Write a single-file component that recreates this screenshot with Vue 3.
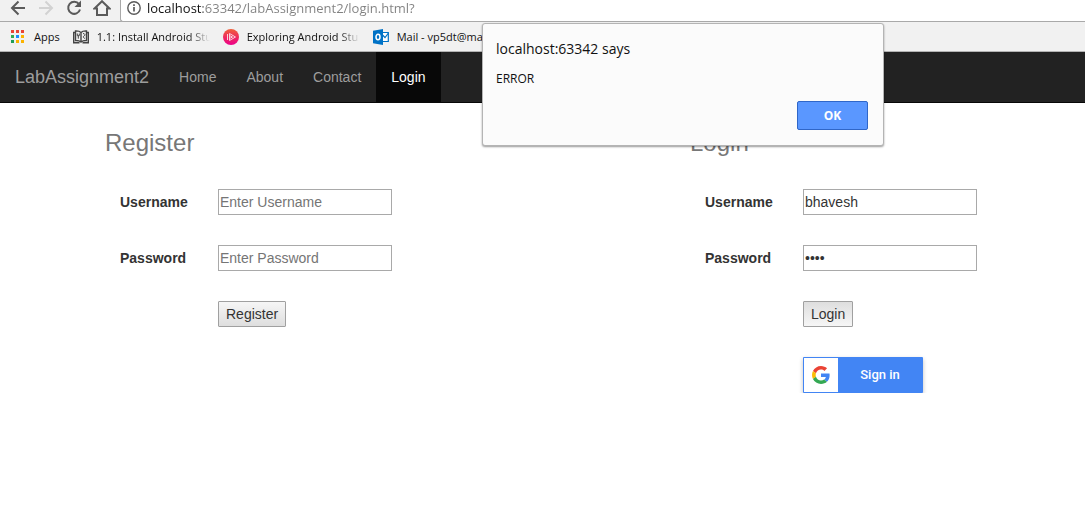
<script setup>
import { ref } from 'vue'

const address = ref('localhost:63342/labAssignment2/login.html?')
const newUser = ref('')
const newPassword = ref('')
const user = ref('bhavesh')
const password = ref('abcd')
const dialogOpen = ref(true)

const links = [
  { text: 'Home' },
  { text: 'About' },
  { text: 'Contact' },
  { text: 'Login', active: true },
]

const appColors = [
  '#ea4335', '#ea4335', '#ea4335',
  '#34a853', '#1a8cff', '#fbb300',
  '#1e9e57', '#fbb300', '#fbb300',
]
</script>

<template>
  <div class="window">
    <div class="toolbar">
      <button class="tool" type="button" aria-label="Back">
        <svg width="16" height="16" viewBox="0 0 16 16" fill="none" stroke="#5a5a5a" stroke-width="2">
          <path d="M15 8H2.500M8.500 1.500L2 8l6.500 6.500" />
        </svg>
      </button>
      <button class="tool" type="button" aria-label="Forward" disabled>
        <svg width="16" height="16" viewBox="0 0 16 16" fill="none" stroke="#d2d2d2" stroke-width="2">
          <path d="M1 8h12.500M7.500 1.500L14 8l-6.500 6.500" />
        </svg>
      </button>
      <button class="tool" type="button" aria-label="Reload">
        <svg width="16" height="16" viewBox="0 0 16 16" fill="none" stroke="#5a5a5a" stroke-width="2">
          <path d="M13 4.200A6 6 0 1 0 14 9.500" />
          <path d="M15 0.500V7H8.500z" fill="#5a5a5a" stroke="none" />
        </svg>
      </button>
      <button class="tool" type="button" aria-label="Home page">
        <svg width="18" height="16" viewBox="0 0 18 16" fill="none" stroke="#5a5a5a" stroke-width="2">
          <path d="M1.500 8.500L9 1.200l7.500 7.300h-2.500V15H4V8.500z" />
        </svg>
      </button>
      <div class="omnibox">
        <svg width="14" height="14" viewBox="0 0 14 14" fill="none" stroke="#5a5a5a">
          <circle cx="7" cy="7" r="6.200" stroke-width="1.400" />
          <path d="M7 6v4.500M7 3.300v1.700" stroke-width="1.700" />
        </svg>
        <input v-model="address" class="address" type="text" aria-label="Address" spellcheck="false" />
      </div>
    </div>

    <div class="bookmarks">
      <a class="bookmark apps" href="#">
        <svg width="13" height="13" viewBox="0 0 13 13">
          <rect
            v-for="(color, i) in appColors"
            :key="i"
            :x="(i % 3) * 5"
            :y="Math.floor(i / 3) * 5"
            width="3"
            height="3"
            :fill="color"
          />
        </svg>
        <span>Apps</span>
      </a>
      <a class="bookmark" href="#">
        <svg width="16" height="14" viewBox="0 0 16 14" fill="none" stroke="#444" stroke-width="1.400">
          <path d="M8 2.500C6.500 1 4.500 0.800 2.500 0.900v9.600C4.500 10.400 6.500 10.700 8 12c1.500-1.300 3.500-1.600 5.500-1.500V0.900C11.500 0.800 9.500 1 8 2.500zM8 2.500V12" />
          <path d="M2.500 2.500H0.700v10.300h5.800M13.500 2.500h1.800v10.300H9.500" />
          <path d="M4.300 3.500v2.200h2V3.500M5.300 5.700v3M10 3.500c2.200 0 2.500 1.800 1 2.500-1 .5-1 1.500.8 2.500" stroke-width="1" />
        </svg>
        <span class="clipped">1.1: Install Android Stu</span>
      </a>
      <a class="bookmark" href="#">
        <svg width="16" height="16" viewBox="0 0 16 16">
          <defs>
            <linearGradient id="disc" x1="0" y1="0" x2="0" y2="1">
              <stop offset="0" stop-color="#f0603a" />
              <stop offset="0.600" stop-color="#ee2264" />
              <stop offset="1" stop-color="#ec008c" />
            </linearGradient>
          </defs>
          <circle cx="8" cy="8" r="8" fill="url(#disc)" />
          <path d="M4.500 5v6M6.500 4.500v7l6-3.500zM6.500 6.500l3 1.500-3 1.500" fill="none" stroke="#fbd3dc" stroke-width="1" />
        </svg>
        <span class="clipped">Exploring Android Stu</span>
      </a>
      <a class="bookmark" href="#">
        <svg width="16" height="16" viewBox="0 0 16 16">
          <path d="M9 3.500h6.300v9H9" fill="#fff" stroke="#0072c6" stroke-width="1.200" />
          <path d="M9 5.500l3 3 3.500-4.500" fill="none" stroke="#0072c6" stroke-width="1.200" />
          <path d="M0 1.700L10 0v16L0 14.300z" fill="#0072c6" />
          <ellipse cx="5" cy="8" rx="2" ry="2.700" fill="none" stroke="#fff" stroke-width="1.500" />
        </svg>
        <span>Mail - vp5dt@mail</span>
      </a>
    </div>

    <nav class="navbar">
      <a class="brand" href="#">LabAssignment2</a>
      <a
        v-for="link in links"
        :key="link.text"
        class="nav-link"
        :class="{ active: link.active }"
        href="#"
      >{{ link.text }}</a>
    </nav>

    <main class="content">
      <section>
        <h3>Register</h3>
        <form class="fields" @submit.prevent>
          <label for="new-user">Username</label>
          <input id="new-user" v-model="newUser" type="text" placeholder="Enter Username" />
          <label for="new-password">Password</label>
          <input id="new-password" v-model="newPassword" type="password" placeholder="Enter Password" />
          <button class="submit" type="submit">Register</button>
        </form>
      </section>
      <section>
        <h3>Login</h3>
        <form class="fields" @submit.prevent="dialogOpen = true">
          <label for="user">Username</label>
          <input id="user" v-model="user" type="text" />
          <label for="password">Password</label>
          <input id="password" v-model="password" type="password" />
          <button class="submit pressed" type="submit">Login</button>
          <button class="google" type="button">
            <span class="google-icon">
              <svg width="18" height="18" viewBox="0 0 48 48">
                <path fill="#EA4335" d="M24 9.500c3.540 0 6.710 1.220 9.210 3.600l6.850-6.850C35.900 2.380 30.470 0 24 0 14.620 0 6.510 5.380 2.560 13.220l7.980 6.190C12.430 13.720 17.740 9.500 24 9.500z" />
                <path fill="#4285F4" d="M46.980 24.550c0-1.570-.15-3.090-.38-4.550H24v9.020h12.940c-.58 2.960-2.260 5.480-4.780 7.180l7.730 6c4.510-4.180 7.090-10.360 7.090-17.650z" />
                <path fill="#FBBC05" d="M10.530 28.590c-.48-1.450-.76-2.990-.76-4.590s.27-3.140.76-4.590l-7.980-6.190C.92 16.460 0 20.120 0 24c0 3.880.92 7.540 2.560 10.780l7.970-6.190z" />
                <path fill="#34A853" d="M24 48c6.480 0 11.930-2.130 15.890-5.810l-7.730-6c-2.150 1.450-4.920 2.300-8.160 2.300-6.260 0-11.570-4.220-13.470-9.910l-7.980 6.190C6.510 42.620 14.620 48 24 48z" />
              </svg>
            </span>
            <span class="google-text">Sign in</span>
          </button>
        </form>
      </section>
    </main>

    <div v-if="dialogOpen" class="dialog" role="alertdialog" aria-labelledby="dialog-title">
      <h2 id="dialog-title">localhost:63342 says</h2>
      <p>ERROR</p>
      <button type="button" @click="dialogOpen = false">OK</button>
    </div>
  </div>
</template>

<style>
body {
  margin: 0;
  background: #fff;
}
</style>

<style scoped>
.window,
.window * {
  box-sizing: border-box;
}

.window {
  position: relative;
  overflow: hidden;
  font-family: "Liberation Sans", Arial, sans-serif;
  font-size: 14px;
  line-height: 20px;
  color: #333;
}

a {
  text-decoration: none;
}

button,
input {
  font: inherit;
  color: inherit;
}

svg {
  display: block;
  flex: none;
}

.toolbar {
  display: flex;
  height: 22px;
  padding-left: 4px;
  background: #f1f1f1;
  border-bottom: 1px solid #a9a9a9;
}

.tool {
  display: flex;
  justify-content: center;
  width: 28px;
  height: 16px;
  padding: 0;
  border: 0;
  background: none;
}

.omnibox {
  display: flex;
  flex: 1;
  align-items: flex-start;
  gap: 6px;
  height: 22px;
  margin-left: 4px;
  padding: 1px 0 0 6px;
  background: #fff;
  border: solid #a9a9a9;
  border-width: 0 0 1px 1px;
  border-radius: 0 0 0 3px;
}

.address {
  flex: 1;
  height: 18px;
  margin-top: -2px;
  padding: 0;
  border: 0;
  outline: 0;
  font-family: "Open Sans", "Noto Sans", sans-serif;
  font-size: 13px;
  line-height: 18px;
  color: transparent;
  background: linear-gradient(to right, #111 56px, #808080 56px);
  background-clip: text;
}

.bookmarks {
  display: flex;
  align-items: center;
  height: 30px;
  padding-left: 11px;
  background: #f1f1f1;
  border-bottom: 1px solid #b3b3b3;
  font-family: "Open Sans", "Noto Sans", sans-serif;
  font-size: 11px;
}

.bookmark {
  display: flex;
  align-items: center;
  gap: 8px;
  margin-right: 13px;
  color: #111;
  white-space: nowrap;
}

.apps {
  gap: 10px;
}

.clipped {
  width: 113px;
  overflow: hidden;
  mask-image: linear-gradient(to right, #000 92px, transparent 113px);
}

.navbar {
  display: flex;
  height: 51px;
  background: #222;
  border-bottom: 1px solid #080808;
}

.navbar a {
  padding: 15px;
  color: #9d9d9d;
}

.navbar .brand {
  font-size: 18px;
}

.navbar .active {
  color: #fff;
  background: #080808;
}

.content {
  display: grid;
  grid-template-columns: 3fr 2fr;
  padding: 27px 5px 0 105px;
}

h3 {
  margin: 0;
  font-size: 24px;
  font-weight: 400;
  line-height: 26px;
  color: #777;
}

.fields {
  display: grid;
  grid-template-columns: 68px 174px;
  gap: 30px;
  align-items: center;
  margin: 33px 15px 0;
}

.fields label {
  font-weight: 700;
}

.fields input {
  height: 26px;
  padding: 1px;
  border: 1px solid #a9a9a9;
  background: #fff;
}

.fields input::placeholder {
  color: #757575;
}

.submit {
  grid-column: 2;
  justify-self: start;
  height: 26px;
  padding: 1px 7px;
  border: 1px solid #a0a0a0;
  border-radius: 1px;
  background: linear-gradient(#f6f6f6, #dedede);
}

.pressed {
  background: linear-gradient(#dedede, #f6f6f6);
}

.google {
  display: flex;
  grid-column: 2;
  width: 120px;
  height: 36px;
  padding: 1px;
  border: 0;
  border-radius: 1px;
  background: #4285f4;
  box-shadow: 0 2px 4px rgba(0, 0, 0, 0.25);
}

.google-icon {
  display: flex;
  align-items: center;
  justify-content: center;
  width: 34px;
  height: 34px;
  background: #fff;
}

.google-text {
  flex: 1;
  font-family: Roboto, sans-serif;
  font-size: 13px;
  font-weight: 500;
  line-height: 34px;
  color: #fff;
}

.dialog {
  position: absolute;
  top: 23px;
  left: 482px;
  display: flex;
  flex-direction: column;
  width: 402px;
  padding: 15px;
  padding-left: 13px;
  border: 1px solid #b4b4b4;
  border-radius: 3px;
  background: #fbfbfb;
  box-shadow: 0 1px 2px rgba(0, 0, 0, 0.4);
  font-family: "Open Sans", "Noto Sans", sans-serif;
  color: #111;
}

.dialog h2 {
  margin: 0;
  font-size: 14px;
  font-weight: 400;
  line-height: 20px;
}

.dialog p {
  margin: 10px 0 12px;
  font-size: 12px;
  line-height: 20px;
}

.dialog button {
  align-self: flex-end;
  width: 71px;
  height: 29px;
  padding: 0;
  border: 1px solid #2f66c8;
  border-radius: 2px;
  background: #5a97ff;
  font-size: 12px;
  font-weight: 700;
  color: #fff;
}
</style>
